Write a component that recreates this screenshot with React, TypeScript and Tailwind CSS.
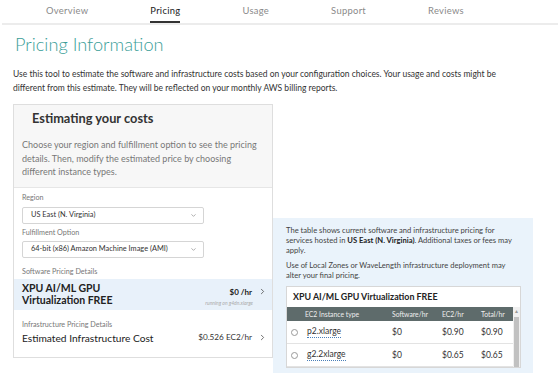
import { ChevronRight, ChevronDown } from "lucide-react";

const tabs = ["Overview", "Pricing", "Usage", "Support", "Reviews"];

const rows = [
  { type: "p2.xlarge", sw: "$0", ec2: "$0.90", total: "$0.90" },
  { type: "g2.2xlarge", sw: "$0", ec2: "$0.65", total: "$0.65" },
];

const Select = ({ value }: { value: string }) => (
  <div className="w-[182px] h-[17px] bg-white border border-[#d5d5d5] rounded-[2px] flex items-center justify-between pl-[8px] pr-[6px] text-[7.4px] text-[#333] whitespace-nowrap">
    <span>{value}</span>
    <ChevronDown className="w-[7px] h-[7px] text-[#777]" strokeWidth={2} />
  </div>
);

const App = () => {
  return (
    <div className="w-[558px] h-[373px] overflow-hidden bg-white font-['Lato',sans-serif] text-[#333]">
      {/* tabs */}
      <nav className="h-[25px] border-b-2 border-[#ececec] ml-[2px] flex gap-[62px] pl-[44px] text-[9.4px] tracking-[0.3px] text-[#8a8a8a]">
        {tabs.map((t) => (
          <div
            key={t}
            className={
              t === "Pricing"
                ? "h-full flex items-center text-[#222] border-b-2 border-[#333] pt-[2px]"
                : "h-full flex items-center"
            }
          >
            {t}
          </div>
        ))}
      </nav>

      <h1 className="ml-[15px] mt-[6px] text-[18.2px] font-light text-[#3a9e98] leading-[26px]">
        Pricing Information
      </h1>

      <p className="ml-[13px] mt-[11px] w-[500px] text-[8.5px] leading-[13.5px] text-[#333]">
        Use this tool to estimate the software and infrastructure costs based on your configuration choices. Your usage and costs might be different from this estimate. They will be reflected on your monthly AWS billing reports.
      </p>

      <div className="mt-[9px] flex items-start">
        {/* left panel */}
        <div className="ml-[13px] w-[260px] border border-[#dedede] bg-white">
          <div className="bg-[#f7f7f7] border-b border-[#e6e6e6] pb-[8px]">
            <h2 className="pl-[18px] pt-[4px] text-[12.8px] font-bold text-[#333] leading-[18px]">
              Estimating your costs
            </h2>
            <p className="mt-[11px] px-[8px] text-[9px] leading-[13.5px] text-[#777]">
              Choose your region and fulfillment option to see the pricing details. Then, modify the estimated price by choosing different instance types.
            </p>
          </div>
          <div className="pt-[4px] px-[8px]">
            <div className="text-[7.2px] text-[#777] leading-[11px] mb-[4px]">Region</div>
            <Select value="US East (N. Virginia)" />
            <div className="text-[7.2px] text-[#777] leading-[11px] mt-[3px] mb-[3px]">Fulfillment Option</div>
            <Select value="64-bit (x86) Amazon Machine Image (AMI)" />
            <div className="text-[7.2px] text-[#777] leading-[11px] mt-[8px]">Software Pricing Details</div>
          </div>
          <div className="bg-[#e8f1fa] mt-[2px] h-[31px] flex items-center justify-between pl-[8px] pr-[5px]">
            <div className="text-[10.5px] font-bold leading-[12.5px] text-[#222]">
              XPU AI/ML GPU
              <br />
              Virtualization FREE
            </div>
            <div className="flex flex-col items-end mt-[5px]">
              <div className="flex items-center gap-[6px] text-[8px] font-bold text-[#222]">
                $0 /hr
                <ChevronRight className="w-[9px] h-[9px] text-[#444]" strokeWidth={2} />
              </div>
              <div className="text-[5px] italic text-[#aaa] mr-[14px] mt-[2px]">running on g4dn.xlarge</div>
            </div>
          </div>
          <div className="px-[8px] pt-[9px] pb-[11px]">
            <div className="text-[7.2px] text-[#777] leading-[11px]">Infrastructure Pricing Details</div>
            <div className="flex items-center justify-between">
              <span className="text-[10.2px] text-[#222] leading-[16px]">Estimated Infrastructure Cost</span>
              <span className="flex items-center gap-[6px] text-[8.2px] text-[#333]">
                $0.526 EC2/hr
                <ChevronRight className="w-[9px] h-[9px] text-[#444] mr-[-3px]" strokeWidth={2} />
              </span>
            </div>
          </div>
        </div>

        {/* right panel */}
        <div className="mt-[114px] w-[260px] h-[160px] bg-[#eaf3fb] pl-[13px] pr-[11px] pt-[7px]">
          <p className="text-[7.6px] leading-[10px] text-[#444]">
            The table shows current software and infrastructure pricing for services hosted in{" "}
            <b className="text-[#222] leading-[10px]">US East (N. Virginia)</b>. Additional taxes or fees may apply.
          </p>
          <p className="mt-[5px] text-[7.6px] leading-[10px] text-[#444]">
            Use of Local Zones or WaveLength infrastructure deployment may alter your final pricing.
          </p>
          <div className="mt-[6px] mr-[1px] bg-white border border-[#d7d7d7]">
            <div className="h-[20px] flex items-center pl-[6px] text-[8.9px] font-bold text-[#222]">
              XPU AI/ML GPU Virtualization FREE
            </div>
            <div className="flex">
              <div className="flex-1">
                <div className="h-[14px] bg-[#5e6b6b] flex items-center text-[6.8px] text-[#eee]">
                  <span className="w-[105px] pl-[18px]">EC2 Instance type</span>
                  <span className="w-[50px]">Software/hr</span>
                  <span className="w-[39px]">EC2/hr</span>
                  <span>Total/hr</span>
                </div>
                {rows.map((r) => (
                  <div key={r.type} className="h-[23px] border-b border-[#e3e3e3] flex items-center text-[8.5px] text-[#333]">
                    <span className="w-[105px] flex items-center">
                      <span className="ml-[4px] mr-[9px] w-[7px] h-[7px] rounded-full border border-[#999]" />
                      <span className="border-b border-dotted border-[#4a7fb8] leading-[11px]">{r.type}</span>
                    </span>
                    <span className="w-[50px]">{r.sw}</span>
                    <span className="w-[39px]">{r.ec2}</span>
                    <span>{r.total}</span>
                  </div>
                ))}
              </div>
              <div className="w-[7px] bg-[#f0f0f0] flex flex-col">
                <div className="h-[8px] bg-[#f0f0f0] text-[5px] text-[#999] leading-[8px] text-center">▲</div>
                <div className="mt-[2px] mx-[1px] flex-1 bg-[#c1c1c1]" />
              </div>
            </div>
          </div>
        </div>
      </div>
    </div>
  );
};

export default App;
